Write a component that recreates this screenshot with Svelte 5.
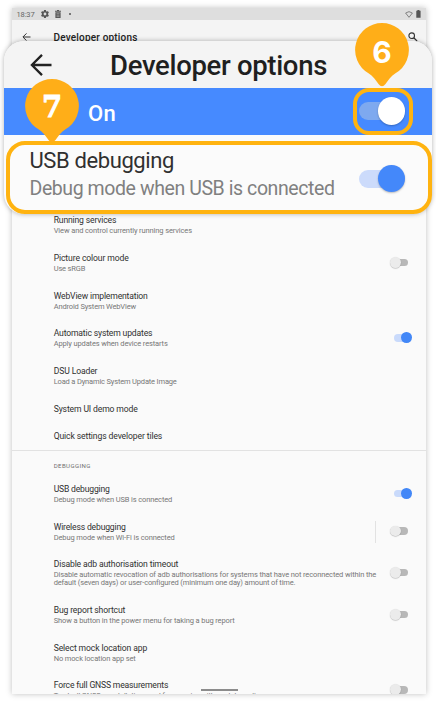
<script>
  const general = [
    { title: 'Running services', sub: 'View and control currently running services', tw: 62.5, sw: 138.3 },
    { title: 'Picture colour mode', sub: 'Use sRGB', toggle: 'off', tw: 75, sw: 31.5 },
    { title: 'WebView implementation', sub: 'Android System WebView', tw: 94, sw: 82.3 },
    { title: 'Automatic system updates', sub: 'Apply updates when device restarts', toggle: 'on', tw: 98.7, sw: 114 },
    { title: 'DSU Loader', sub: 'Load a Dynamic System Update Image', tw: 43.7, sw: 123 },
    { title: 'System UI demo mode', tw: 84 },
    { title: 'Quick settings developer tiles', tw: 108.5 }
  ];
  const debugging = [
    { title: 'USB debugging', sub: 'Debug mode when USB is connected', toggle: 'on', tw: 56, sw: 118.5 },
    { title: 'Wireless debugging', sub: 'Debug mode when Wi-Fi is connected', toggle: 'off', split: true, tw: 72, sw: 121 },
    { title: 'Disable adb authorisation timeout', sub: 'Disable automatic revocation of adb authorisations for systems that have not reconnected within the', sub2: 'default (seven days) or user-configured (minimum one day) amount of time.', toggle: 'off', tw: 124.5, sw: 322.5, sw2: 241.5 },
    { title: 'Bug report shortcut', sub: 'Show a button in the power menu for taking a bug report', toggle: 'off', tw: 71.5, sw: 181 },
    { title: 'Select mock location app', sub: 'No mock location app set', tw: 93.5, sw: 82 },
    { title: 'Force full GNSS measurements', sub: 'Track all GNSS constellations and frequencies with no duty cycling', toggle: 'off', tw: 114.5, sw: 210 }
  ];

  // Spreads the letters so that a label takes exactly the given width.
  function fit(node, width) {
    if (!width) return;
    const natural = node.getBoundingClientRect().width;
    node.style.letterSpacing = (width - natural) / node.textContent.length + 'px';
  }
</script>

{#snippet row(item)}
  <div class="row">
    <div class="copy">
      <div class="title"><span use:fit={item.tw}>{item.title}</span></div>
      {#if item.sub}
        <div class="sub"><span use:fit={item.sw}>{item.sub}</span></div>
      {/if}
      {#if item.sub2}
        <div class="sub"><span use:fit={item.sw2}>{item.sub2}</span></div>
      {/if}
    </div>
    {#if item.split}<i class="split"></i>{/if}
    {#if item.toggle}<i class="toggle {item.toggle}"></i>{/if}
  </div>
{/snippet}

{#snippet pin(digit, kind)}
  <div class="pin {kind}">
    <svg width="54" height="64" viewBox="0 0 54 64">
      <path fill="#ffae18" d="M27 0A27 27 0 0 1 40.5 50.3C36.2 52.7 33 57.5 30.5 61Q27 65.4 23.5 61C21 57.5 17.8 52.7 13.5 50.3A27 27 0 0 1 27 0Z" />
    </svg>
    <b>{digit}</b>
  </div>
{/snippet}

<main>
  <section class="device">
    <div class="status">
      <span class="time" use:fit={18}>18:37</span>
      <svg class="gear" width="8" height="8" viewBox="2 2 20 20"><path fill="#555" fill-rule="evenodd" d="M19.4 13c0-.3.1-.6.1-1s0-.7-.1-1l2.1-1.7c.2-.1.2-.4.1-.6l-2-3.5c-.1-.2-.4-.3-.6-.2l-2.5 1c-.5-.4-1.1-.7-1.7-1L14.4 2.4c0-.2-.2-.4-.5-.4h-4c-.2 0-.4.2-.5.4L9.1 5c-.6.3-1.2.6-1.7 1l-2.5-1c-.2-.1-.5 0-.6.2l-2 3.5c-.1.2-.1.5.1.6L4.5 11v2l-2.1 1.7c-.2.1-.2.4-.1.6l2 3.5c.1.2.4.3.6.2l2.5-1c.5.4 1.1.7 1.7 1l.3 2.6c.1.2.3.4.5.4h4c.3 0 .5-.2.5-.4l.4-2.6c.6-.3 1.2-.6 1.7-1l2.5 1c.2.1.5 0 .6-.2l2-3.5c.1-.2.1-.5-.1-.6zM12 15.5a3.5 3.5 0 1 1 0-7 3.5 3.5 0 0 1 0 7z" /></svg>
      <svg class="bin" width="6" height="8" viewBox="0 0 6 8"><path fill="#555" d="M0 .7h2V0h2v.7h2v1H0zM.4 2.2h5.2V8H.4z" /><path stroke="#bbb" stroke-width=".6" d="M1.5 3.7h3M1.5 5.2h3M1.5 6.6h3" /></svg>
      <i class="dot"></i>
      <svg class="wifi" width="8" height="7" viewBox="0 0 8 7"><path fill="none" stroke="#777" stroke-width=".9" stroke-linejoin="round" d="M.6 2Q4-.7 7.4 2L4 6.3z" /></svg>
      <svg width="5" height="8" viewBox="0 0 5 8"><path fill="#555" d="M1.4 0h2v.8h1.2v7H.3v-7h1.1z" /></svg>
    </div>
    <div class="appbar">
      <svg width="9" height="8" viewBox="0 0 9 8"><path fill="none" stroke="#333" stroke-width="1" d="M8.5 4H1M4.5.4L.9 4l3.6 3.6" /></svg>
      <span class="heading"><span use:fit={84}>Developer options</span></span>
      <svg class="search" width="10" height="10" viewBox="0 0 10 10"><circle cx="3.7" cy="3.7" r="2.8" fill="none" stroke="#333" stroke-width="1.1" /><path stroke="#333" stroke-width="1.3" d="M5.8 5.8L9.1 9.1" /></svg>
    </div>
    <div class="list">
      {#each general as item}{@render row(item)}{/each}
      <div class="group"><span use:fit={37}>DEBUGGING</span></div>
      {#each debugging as item}{@render row(item)}{/each}
    </div>
    <i class="home"></i>
  </section>

  <section class="callout">
    <header>
      <svg width="22" height="22" viewBox="0 0 22 22"><path fill="none" stroke="#222" stroke-width="2.3" d="M21.5 11H2M12 .9L1.9 11 12 21.1" /></svg>
      <span class="big"><span use:fit={217}>Developer options</span></span>
    </header>
    <div class="master">
      <span class="state" use:fit={28}>On</span>
      <i class="switch light"></i>
    </div>
    <div class="setting">
      <div>
        <div class="name"><span use:fit={144.5}>USB debugging</span></div>
        <div class="desc"><span use:fit={305}>Debug mode when USB is connected</span></div>
      </div>
      <i class="switch"></i>
    </div>
  </section>

  <i class="ring small"></i>
  <i class="ring large"></i>
  {@render pin('6', 'six')}
  {@render pin('7', 'seven')}
</main>

<style>
  :global(body) { background: #fff; }
  main {
    position: relative;
    box-sizing: border-box;
    width: 436px;
    height: 712px;
    padding: 8px 10px 18px 12px;
    overflow: hidden;
    font-family: Roboto, sans-serif;
    white-space: nowrap;
  }
  .device {
    position: relative;
    display: flex;
    flex-direction: column;
    width: 414px;
    height: 686px;
    background: #fafafa;
    box-shadow: 0 0 6px rgba(0, 0, 0, .25);
  }
  .status {
    display: flex;
    align-items: center;
    flex: none;
    height: 12px;
    padding: 0 5px 0 4.5px;
    background: #dedede;
    color: #666;
    font-size: 7.5px;
    line-height: 13px;
  }
  .gear { margin-left: 6.5px; }
  .bin { margin-left: 6px; }
  .dot { width: 2px; height: 2px; margin-left: 8px; border-radius: 1px; background: #555; }
  .wifi { margin-left: auto; margin-right: 3px; }
  .appbar {
    display: flex;
    align-items: center;
    flex: none;
    height: 34px;
    padding: 0 8.5px 0 10px;
    background: #f4f4f4;
    color: #222;
  }
  .heading { margin-left: 22.5px; font-size: 10px; font-weight: 500; }
  .search { margin-left: auto; }
  .list {
    flex: 1;
    min-height: 0;
    padding-top: 152.6px;
    overflow: hidden;
  }
  .row {
    display: flex;
    align-items: center;
    box-sizing: border-box;
    min-height: 27.6px;
    padding: 8.8px 18px 8.6px 41.7px;
  }
  .copy { flex: 1; }
  .title { height: 10.2px; color: #303030; font-size: 8.6px; line-height: 10.2px; }
  .sub { height: 8.2px; color: #777; font-size: 7.5px; line-height: 8.2px; }
  .title + .sub { margin-top: 1.9px; }
  .toggle {
    position: relative;
    width: 14px;
    height: 7.5px;
    margin-bottom: 1.4px;
    border-radius: 4px;
    background: #b8b8b8;
  }
  .toggle::after {
    content: '';
    position: absolute;
    top: -1.7px;
    left: -3.8px;
    width: 10.8px;
    height: 10.8px;
    border-radius: 50%;
    background: #ebebeb;
    box-shadow: 0 .5px 1px rgba(0, 0, 0, .3);
  }
  .toggle.on { background: #c9dafb; }
  .toggle.on::after { left: 7px; background: #4287f7; box-shadow: none; }
  .split { width: 1px; height: 22px; margin: -2px 18px -2px 0; background: #e2e2e2; }
  .group {
    box-sizing: border-box;
    height: 25px;
    padding: 10.3px 0 0 41.7px;
    border-top: 1px solid #e2e2e2;
    color: #707070;
    font-size: 6.1px;
    line-height: 9px;
  }
  .home { position: absolute; left: 188.5px; bottom: 3px; width: 37.5px; height: 2px; background: #8c8c8c; }

  .callout {
    position: absolute;
    top: 41px;
    left: 4px;
    width: 428px;
    height: 173px;
    border-radius: 20px;
    overflow: hidden;
    background: #fbfbfb;
    box-shadow: 0 0 5px rgba(0, 0, 0, .3);
  }
  header {
    display: flex;
    align-items: center;
    box-sizing: border-box;
    height: 46.5px;
    padding: 3px 0 0 26px;
    background: #f4f4f4;
    color: #1f1f1f;
  }
  header svg { margin-top: -2px; }
  .big { margin-left: 58px; font-size: 27.5px; font-weight: 500; line-height: 32px; }
  .master {
    display: flex;
    align-items: center;
    justify-content: space-between;
    height: 47px;
    padding: 0 27px 0 84px;
    background: #468aff;
    color: #fff;
    font-size: 22px;
    font-weight: 500;
  }
  .state { padding-top: 4px; }
  .setting {
    display: flex;
    justify-content: space-between;
    padding: 11.5px 27px 0 25.5px;
  }
  .name { height: 28px; color: #303030; font-size: 22px; line-height: 29px; }
  .desc { height: 28px; color: #808080; font-size: 19.5px; line-height: 29px; }
  .switch {
    position: relative;
    width: 46px;
    height: 18px;
    border-radius: 9px;
    background: #ccdbfb;
  }
  .setting .switch { margin-top: 23.5px; }
  .switch::after {
    content: '';
    position: absolute;
    top: -4.8px;
    left: 19px;
    width: 27px;
    height: 27.5px;
    border-radius: 50%;
    background: #4488fa;
    box-shadow: 0 1px 2px rgba(0, 0, 0, .25);
  }
  .switch.light { background: #7ea9ef; }
  .switch.light::after { background: #fff; }

  .ring { position: absolute; box-sizing: border-box; border: 4.5px solid #ffb310; }
  .small { left: 353px; top: 87.5px; width: 60px; height: 47.5px; border-radius: 16px; }
  .large { left: 5.5px; top: 141px; width: 426.5px; height: 72.5px; border-width: 4px; border-radius: 19px; }
  .pin { position: absolute; width: 54px; height: 64px; }
  .pin svg { display: block; }
  .pin b {
    position: absolute;
    top: 8.5px;
    left: 0;
    width: 54px;
    color: #fff;
    font: 700 30px/40px Inter, sans-serif;
    text-align: center;
  }
  .six { left: 355px; top: 23px; }
  .seven { left: 25px; top: 78.5px; }
  .seven b { font: 700 29px/40px 'DejaVu Serif', serif; -webkit-text-stroke: .9px #fff; }
</style>
